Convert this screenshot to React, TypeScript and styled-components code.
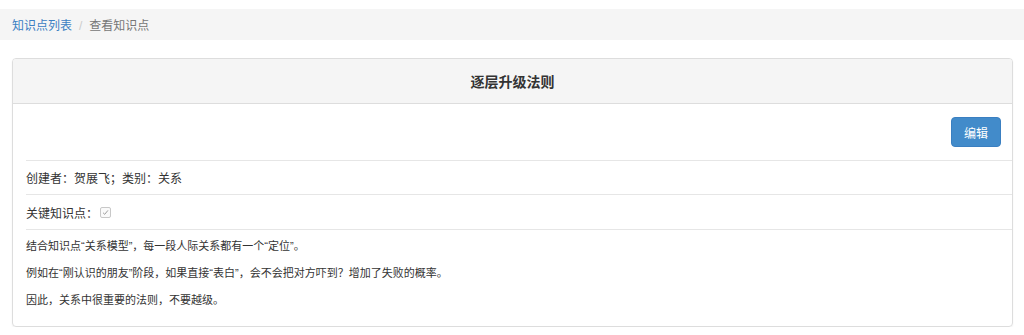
import * as React from 'react'
import styled, { createGlobalStyle } from 'styled-components'

// ___________________________________________________________________

const GlobalStyle = createGlobalStyle`
  html, body {
    margin: 0;
    padding: 0;
    background: #fff;
  }
  body {
    font-family: "Liberation Sans", "Noto Sans CJK SC", sans-serif;
    color: #333;
  }
`

const Crumbs = styled.ol`
  list-style: none;
  margin: 9px 0 0;
  padding: 0 12px;
  height: 31px;
  background: #f5f5f5;
  display: flex;
  align-items: center;
  font-size: 12px;
`

const Crumb = styled.li<{ active?: boolean }>`
  color: ${(p) => (p.active ? '#777' : '#3c80c3')};

  &:not(:first-child)::before {
    content: '/';
    color: #ccc;
    padding: 0 7px 0 7px;
  }
`

const Panel = styled.section`
  margin: 18px 11px 0 12px;
  border: 1px solid #ddd;
  border-radius: 4px;
  box-shadow: 0 1px 2px rgba(0, 0, 0, 0.06);
  overflow: hidden;
`

const Heading = styled.header`
  height: 44px;
  background: #f5f5f5;
  border-bottom: 1px solid #ddd;
  display: flex;
  align-items: center;
  justify-content: center;
`

const Title = styled.h3`
  margin: 0;
  font-size: 14px;
  font-weight: bold;
  color: #333;
`

const Toolbar = styled.div`
  display: flex;
  justify-content: flex-end;
  padding: 13px 11px 13px 0;
`

const Button = styled.button`
  height: 30px;
  padding: 0 12px;
  border: 1px solid #3a7fc1;
  border-radius: 4px;
  background: #428bca;
  color: #fff;
  font-family: inherit;
  font-size: 12px;
  cursor: pointer;
`

const Row = styled.div<{ tall?: boolean }>`
  margin-left: 13px;
  height: ${(p) => (p.tall ? 34 : 33)}px;
  border-top: 1px solid #e6e6e6;
  display: flex;
  align-items: center;
  font-size: 12px;
`

const Content = styled.div`
  margin-left: 13px;
  border-top: 1px solid #e6e6e6;
  padding: 3px 0 12px;
  font-size: 11px;
  line-height: 27px;
`

const Para = styled.p`
  margin: 0;
`

const Check = styled.span`
  display: inline-flex;
  align-items: center;
  justify-content: center;
  width: 9px;
  height: 9px;
  margin-left: 2px;
  border: 1px solid #c8c8c8;
  border-radius: 2px;
  background: #fafafa;
`

// ___________________________________________________________________

const App: React.FC = () => {
  return (
    <>
      <GlobalStyle />
      <Crumbs>
        <Crumb>知识点列表</Crumb>
        <Crumb active>查看知识点</Crumb>
      </Crumbs>
      <Panel>
        <Heading>
          <Title>逐层升级法则</Title>
        </Heading>
        <Toolbar>
          <Button>编辑</Button>
        </Toolbar>
        <Row>创建者：贺展飞；类别：关系</Row>
        <Row tall>
          关键知识点：
          <Check>
            <svg width="7" height="7" viewBox="0 0 8 8">
              <path d="M1.2 4.3 L3.1 6.1 L6.8 1.6" fill="none" stroke="#999" strokeWidth="1.1" />
            </svg>
          </Check>
        </Row>
        <Content>
          <Para>结合知识点“关系模型”，每一段人际关系都有一个“定位”。</Para>
          <Para>例如在“刚认识的朋友”阶段，如果直接“表白”，会不会把对方吓到？增加了失败的概率。</Para>
          <Para>因此，关系中很重要的法则，不要越级。</Para>
        </Content>
      </Panel>
    </>
  )
}

export default App
